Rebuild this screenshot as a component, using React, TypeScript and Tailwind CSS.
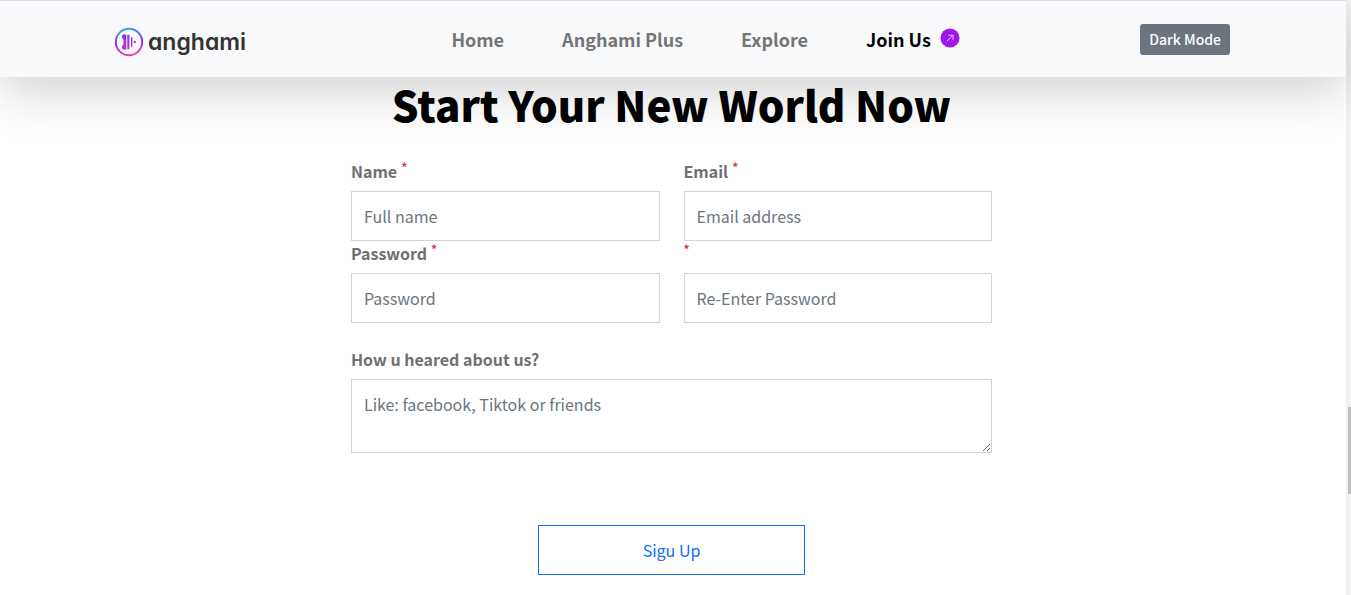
import type { InputHTMLAttributes } from 'react';

const links = [
  { label: 'Home', active: false },
  { label: 'Anghami Plus', active: false },
  { label: 'Explore', active: false },
  { label: 'Join Us', active: true },
];

function Logo() {
  return (
    <a href="#home" aria-label="anghami" className="flex items-center gap-1 pt-1.5 text-[#333]">
      <svg width="30" height="30" viewBox="0 0 30 30" fill="none" aria-hidden="true">
        <defs>
          <linearGradient id="ring" x1="13" y1="1" x2="17" y2="29" gradientUnits="userSpaceOnUse">
            <stop offset="0" stopColor="#2aaeea" />
            <stop offset="0.5" stopColor="#8f2be6" />
            <stop offset="1" stopColor="#f0439a" />
          </linearGradient>
          <linearGradient id="wave" x1="15" y1="7" x2="15" y2="23" gradientUnits="userSpaceOnUse">
            <stop offset="0" stopColor="#7a3df0" />
            <stop offset="1" stopColor="#cc2bc4" />
          </linearGradient>
        </defs>
        <circle cx="15" cy="15" r="13.2" stroke="url(#ring)" strokeWidth="1.9" />
        <path
          d="M12.3 8v14c-.6.7-1.5.9-2.3.7-1.3-.3-2.1-1.300-2.100-2.500 0-.7.2-1.300.7-1.800.6-.6.9-1 .9-1.600v-3.600c0-.6-.3-1-.9-1.600-.5-.5-.7-1.100-.7-1.800 0-1.200.8-2.200 2.100-2.500.8-.2 1.700 0 2.300.7Z"
          fill="url(#wave)"
        />
        <path
          d="M13.300 7.700h2.100v14.600h-2.100zM17 10.300h1.400v9.400H17zM19.800 13.800c1.300-.1 2.200.4 2.200 1.200s-.9 1.300-2.200 1.200z"
          fill="url(#wave)"
        />
      </svg>
      <span className="font-[Inter,sans-serif] text-[23px] leading-7 font-semibold [font-feature-settings:'cv11','ss03']">
        anghami
      </span>
    </a>
  );
}

function ArrowBadge() {
  return (
    <svg
      className="absolute top-1/2 right-0 -mt-[11px] size-5"
      viewBox="0 0 20 20"
      fill="none"
      aria-hidden="true"
    >
      <circle cx="10" cy="10" r="9.500" fill="#a016ee" />
      <path d="M7 13l6-5.800M8.300 7.200H13v4.600" stroke="#e6c4fb" strokeWidth="1" />
    </svg>
  );
}

interface FieldProps extends InputHTMLAttributes<HTMLInputElement> {
  id: string;
  label?: string;
}

function Field({ id, label, ...rest }: FieldProps) {
  return (
    <div>
      <label htmlFor={id} className="mb-2 flex h-6 items-center gap-1 font-bold text-[#707070]">
        {label}
        <span className="mb-2 text-xs leading-4 text-[#dc3545]">*</span>
      </label>
      <input
        id={id}
        className="block h-[50px] w-full border border-[#ced4da] bg-white px-3 placeholder:text-[#6c757d]"
        {...rest}
      />
    </div>
  );
}

export default function App() {
  return (
    <div className="flex h-screen bg-white font-['Noto_Sans_CJK_SC',sans-serif] text-base leading-6 text-black">
      <div className="min-w-0 flex-1">
        <header className="relative z-10 border-t border-[#dcdde0] bg-[#f8f9fb] pr-0.5 shadow-[0_16px_48px_rgba(0,0,0,0.175)]">
          <div className="mx-auto flex h-[76px] w-5/6 max-w-[1116px] items-center justify-between">
            <Logo />
            <nav className="mr-1 flex text-lg font-bold">
              {links.map(({ label, active }) => (
                <a
                  key={label}
                  href="#"
                  className={active ? 'relative px-[29px] text-black' : 'px-[29px] text-[#747576]'}
                >
                  {label}
                  {active && <ArrowBadge />}
                </a>
              ))}
            </nav>
            <button type="button" className="h-[31px] rounded-[3px] bg-[#6c757d] px-[9px] text-sm font-medium text-white">
              Dark Mode
            </button>
          </div>
        </header>

        <main className="pr-[3px]">
          <h1 className="pt-px text-center text-[42px] leading-[52px] font-black">Start Your New World Now</h1>
          <form className="mx-auto mt-[29px] max-w-[641px]">
            <div className="grid grid-cols-2 gap-x-6">
              <Field id="name" label="Name" placeholder="Full name" />
              <Field id="email" label="Email" type="email" placeholder="Email address" />
              <Field id="password" label="Password" type="password" placeholder="Password" />
              <Field id="confirm" type="password" placeholder="Re-Enter Password" aria-label="Re-Enter Password" />
            </div>
            <label htmlFor="source" className="mt-6 mb-2 flex h-6 items-center font-bold text-[#707070]">
              How u heared about us?
            </label>
            <textarea
              id="source"
              className="block h-[74px] w-full resize border border-[#ced4da] bg-white px-3 py-3 placeholder:text-[#6c757d]"
              placeholder="Like: facebook, Tiktok or friends"
            />
            <button
              type="submit"
              className="mx-auto mt-[72px] block h-[50px] w-[267px] border border-[#0d6efd] text-[#0d6efd]"
            >
              Sigu Up
            </button>
          </form>
        </main>
      </div>
      <div className="grid w-[5px] grid-rows-[407fr_87fr_101fr] bg-[#f1f1f1] pl-0.5" aria-hidden="true">
        <div className="row-start-2 bg-[#c1c1c1]" />
      </div>
    </div>
  );
}
